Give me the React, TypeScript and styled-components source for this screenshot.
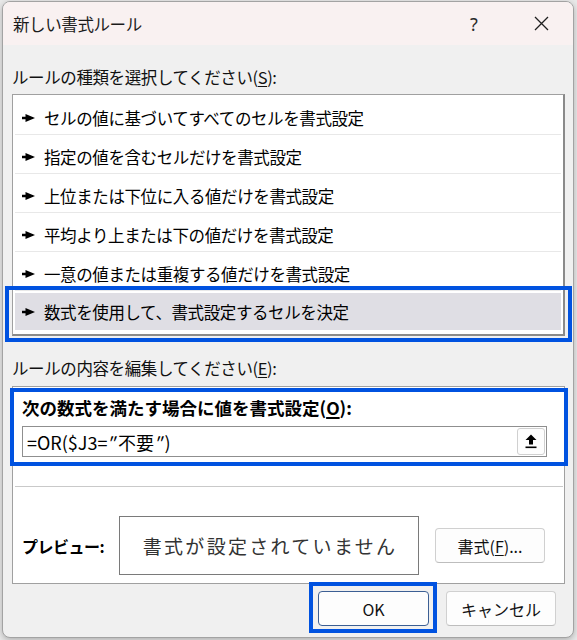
import React from "react";
import styled, { createGlobalStyle } from "styled-components";

const GlobalStyle = createGlobalStyle`
  html, body { margin: 0; padding: 0; background: #e9e9e9; }
  body {
    width: 577px;
    height: 640px;
    overflow: hidden;
    font-family: "Noto Sans CJK JP", "Noto Sans", sans-serif;
  }
`;

const Dialog = styled.div`
  position: relative;
  box-sizing: border-box;
  margin: 1px 0 0 2px;
  width: 572px;
  height: 637px;
  background: #f0f0f0;
  border: 1px solid #a3a3a3;
  border-radius: 8px;
  overflow: hidden;
  display: flex;
  flex-direction: column;
  color: #000;
  box-shadow: 0 2px 6px rgba(0, 0, 0, 0.25);
`;

const TitleBar = styled.div`
  height: 43px;
  flex: none;
  display: flex;
  align-items: center;
  padding-left: 10px;
  background: #f9f1f1;
`;

const Title = styled.div`
  font-size: 16.5px;
  letter-spacing: -0.4px;
  line-height: 20px;
  color: #1b1b1b;
`;

const TitleButtons = styled.div`
  margin-left: auto;
  display: flex;
  height: 100%;
`;

const TitleButton = styled.div<{ $w: number }>`
  width: ${(p) => p.$w}px;
  height: 100%;
  display: flex;
  align-items: center;
  justify-content: center;
  font-family: "Noto Sans", sans-serif;
  font-size: 18px;
  color: #2a2a2a;
`;

const Body = styled.div`
  flex: 1;
  display: flex;
  flex-direction: column;
  padding: 0 8px 0 9px;
`;

const SectionLabel = styled.div<{ $top: number }>`
  margin-top: ${(p) => p.$top}px;
  font-size: 16.5px;
  letter-spacing: -0.4px;
  line-height: 20px;
  height: 20px;
  color: #111;
  u { text-decoration-thickness: 1px; text-underline-offset: 2px; }
`;

const ListBox = styled.div`
  margin-top: 7px;
  height: 242px;
  box-sizing: border-box;
  background: #fff;
  border: 1px solid #a0a0a0;
  border-right: 2px solid #8a8a8a;
  border-bottom: 2px solid #8a8a8a;
  padding: 1px 2px 0 2px;
  display: flex;
  flex-direction: column;
`;

const Row = styled.div<{ $selected?: boolean }>`
  box-sizing: border-box;
  display: flex;
  align-items: center;
  gap: 9px;
  padding: ${(p) => (p.$selected ? "1px" : "6px")} 0 0 7px;
  height: ${(p) => (p.$selected ? "37px" : "39px")};
  margin-top: ${(p) => (p.$selected ? "2px" : "0")};
  border-bottom: ${(p) => (p.$selected ? "none" : "1px solid #e8e8e8")};
  background: ${(p) => (p.$selected ? "#dfdee4" : "transparent")};
  font-size: 16.5px;
  letter-spacing: -0.4px;
  line-height: 20px;
  color: #000;
`;

const GroupBox = styled.div`
  margin-top: 8px;
  height: 198px;
  box-sizing: border-box;
  background: #fff;
  border: 1px solid #a0a0a0;
  padding: 11px 17px 0 9px;
  display: flex;
  flex-direction: column;
`;

const BoldLabel = styled.div`
  font-size: 17.5px;
  line-height: 20px;
  font-weight: 700;
  color: #000;
  u { text-decoration-thickness: 2px; text-underline-offset: 2px; }
`;

const FormulaInput = styled.div`
  margin-top: 8px;
  height: 31px;
  box-sizing: border-box;
  border: 1px solid #8f8f8f;
  background: #fff;
  display: flex;
  align-items: center;
  padding: 0 1px 0 4px;
`;

const FormulaText = styled.div`
  flex: 1;
  font-size: 18px;
  line-height: 20px;
  color: #000;
`;

const Quote = styled.span`
  display: inline-block;
  transform: skewX(-18deg);
  margin: 0 1px;
`;

const RefButton = styled.div`
  width: 28px;
  height: 27px;
  box-sizing: border-box;
  border: 1px solid #d0d0d0;
  border-radius: 3px;
  background: #fdfdfd;
  display: flex;
  align-items: center;
  justify-content: center;
`;

const Separator = styled.div`
  margin: 29px -16px 0 -7px;
  height: 1px;
  background: #c9c9c9;
`;

const PreviewRow = styled.div`
  margin-top: 29px;
  height: 59px;
  display: flex;
  align-items: center;
`;

const PreviewLabel = styled.div`
  width: 97px;
  font-size: 16px;
  letter-spacing: -0.5px;
  line-height: 20px;
  font-weight: 700;
  color: #000;
`;

const PreviewBox = styled.div`
  width: 300px;
  height: 59px;
  box-sizing: border-box;
  border: 1px solid #7a7a7a;
  display: flex;
  align-items: center;
  justify-content: center;
  font-size: 19px;
  letter-spacing: 2.3px;
  color: #333;
  padding-left: 2px;
`;

const Button = styled.div<{ $w: number; $default?: boolean }>`
  width: ${(p) => p.$w}px;
  height: 35px;
  box-sizing: border-box;
  border: 1px solid ${(p) => (p.$default ? "#3c5f94" : "#d0d0d0")};
  border-bottom-color: ${(p) => (p.$default ? "#3c5f94" : "#bdbdbd")};
  border-radius: 4px;
  background: #fdfdfd;
  display: flex;
  align-items: center;
  justify-content: center;
  font-size: 16px;
  line-height: 20px;
  color: #111;
  u { text-decoration-thickness: 1px; text-underline-offset: 2px; }
`;

const FormatButton = styled(Button)`
  margin-left: 16px;
`;

const Footer = styled.div`
  margin-top: 7px;
  display: flex;
  justify-content: flex-end;
  gap: 17px;
  padding-right: 9px;
`;

const Highlight = styled.div<{ $x: number; $y: number; $w: number; $h: number }>`
  position: absolute;
  left: ${(p) => p.$x}px;
  top: ${(p) => p.$y}px;
  width: ${(p) => p.$w}px;
  height: ${(p) => p.$h}px;
  box-sizing: border-box;
  border: 4px solid #0052e0;
  pointer-events: none;
`;

const Pointer = () => (
  <svg width="13" height="8" viewBox="0 0 13 8">
    <polygon points="0,2.8 3.5,2.8 3.5,0 13,4 3.5,8 3.5,5.2 0,5.2" fill="#000" />
  </svg>
);

const CloseIcon = () => (
  <svg width="15" height="15" viewBox="0 0 15 15">
    <path d="M1 1 L14 14 M14 1 L1 14" stroke="#1f1f1f" strokeWidth="1.3" fill="none" />
  </svg>
);

const RefIcon = () => (
  <svg width="12" height="15" viewBox="0 0 12 15">
    <polygon points="6,0.5 11.5,6 8,6 8,10.5 4,10.5 4,6 0.5,6" fill="#000" />
    <rect x="0.5" y="12.5" width="11" height="1.6" fill="#000" />
  </svg>
);

const rules = [
  "セルの値に基づいてすべてのセルを書式設定",
  "指定の値を含むセルだけを書式設定",
  "上位または下位に入る値だけを書式設定",
  "平均より上または下の値だけを書式設定",
  "一意の値または重複する値だけを書式設定",
  "数式を使用して、書式設定するセルを決定",
];

export default function App() {
  return (
    <>
      <GlobalStyle />
      <Dialog>
        <TitleBar>
          <Title>新しい書式ルール</Title>
          <TitleButtons>
            <TitleButton $w={70}>?</TitleButton>
            <TitleButton $w={64}>
              <CloseIcon />
            </TitleButton>
          </TitleButtons>
        </TitleBar>
        <Body>
          <SectionLabel $top={22}>
            ルールの種類を選択してください(<u>S</u>):
          </SectionLabel>
          <ListBox>
            {rules.map((r, i) => (
              <Row key={r} $selected={i === rules.length - 1}>
                <Pointer />
                <span>{r}</span>
              </Row>
            ))}
          </ListBox>
          <SectionLabel $top={22}>
            ルールの内容を編集してください(<u>E</u>):
          </SectionLabel>
          <GroupBox>
            <BoldLabel>
              次の数式を満たす場合に値を書式設定(<u>O</u>):
            </BoldLabel>
            <FormulaInput>
              <FormulaText>
                =OR($J3=<Quote>"</Quote>不要<Quote>"</Quote>)
              </FormulaText>
              <RefButton>
                <RefIcon />
              </RefButton>
            </FormulaInput>
            <Separator />
            <PreviewRow>
              <PreviewLabel>プレビュー:</PreviewLabel>
              <PreviewBox>書式が設定されていません</PreviewBox>
              <FormatButton $w={110}>
                書式(<u>F</u>)...
              </FormatButton>
            </PreviewRow>
          </GroupBox>
          <Footer>
            <Button $w={111} $default>
              OK
            </Button>
            <Button $w={110}>キャンセル</Button>
          </Footer>
        </Body>
        <Highlight $x={2} $y={284} $w={567} $h={56} />
        <Highlight $x={7} $y={386} $w={558} $h={78} />
        <Highlight $x={306} $y={580} $w={128} $h={51} />
      </Dialog>
    </>
  );
}
